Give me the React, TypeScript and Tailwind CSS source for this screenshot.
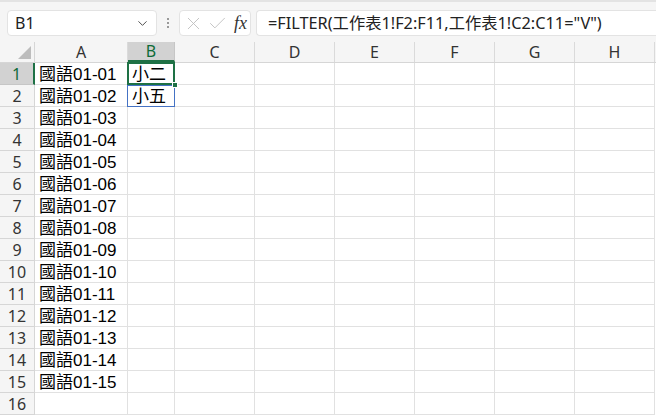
import { ChevronDown, X, Check } from 'lucide-react'

const cols = [
  { name: 'A', w: 'w-[93px]' },
  { name: 'B', w: 'w-[47px]' },
  { name: 'C', w: 'w-[80px]' },
  { name: 'D', w: 'w-[80px]' },
  { name: 'E', w: 'w-[80px]' },
  { name: 'F', w: 'w-[80px]' },
  { name: 'G', w: 'w-[80px]' },
  { name: 'H', w: 'w-[80px]' },
]

const colB: Record<number, string> = { 1: '小二', 2: '小五' }

export default function App() {
  const rows = Array.from({ length: 16 }, (_, i) => i + 1)

  return (
    <div
      className="w-[656px] h-[417px] overflow-hidden bg-white text-black"
      style={{ fontFamily: '"Noto Sans", "Noto Sans CJK TC", sans-serif' }}
    >
      {/* formula bar */}
      <div className="h-[42px] bg-[#f5f5f5] border-t-2 border-[#e3e3e3] flex items-start pt-[8px]">
        <div className="ml-[7px] w-[150px] h-[26px] rounded bg-white border border-[#e3e3e3] flex items-center justify-between pl-[7px] pr-[6px]">
          <span className="text-[16px] leading-none text-[#222]">B1</span>
          <ChevronDown size={15} strokeWidth={1.5} className="text-[#444]" />
        </div>
        <div className="w-[22px] h-[26px] flex flex-col items-center justify-center gap-[2px]">
          <span className="w-[2px] h-[2px] bg-[#999]" />
          <span className="w-[2px] h-[2px] bg-[#999]" />
          <span className="w-[2px] h-[2px] bg-[#999]" />
        </div>
        <div className="w-[72px] h-[26px] rounded bg-white border border-[#e3e3e3] flex items-center pl-[3px] gap-[3px]">
          <X size={21} strokeWidth={1} className="text-[#bdbdbd]" />
          <Check size={21} strokeWidth={1} className="text-[#bdbdbd]" />
          <span
            className="text-[18px] leading-none italic text-[#333] ml-[3px]"
            style={{ fontFamily: '"Liberation Serif", serif' }}
          >
            fx
          </span>
        </div>
        <div className="ml-[5px] flex-1 h-[26px] rounded-l bg-white border border-r-0 border-[#e3e3e3] flex items-center pl-[11px]">
          <span className="text-[16.3px] leading-none text-[#222] whitespace-nowrap">
            =FILTER(工作表1!F2:F11,工作表1!C2:C11="V")
          </span>
        </div>
      </div>

      {/* column headers */}
      <div className="flex h-[21px] bg-[#f5f5f5] border-b border-[#d6d6d6]">
        <div className="w-[35px] shrink-0 border-r border-[#d6d6d6] relative">
          <div
            className="absolute right-[3px] bottom-[3px] w-[13px] h-[13px] bg-[#bdbdbd]"
            style={{ clipPath: 'polygon(100% 0, 100% 100%, 0 100%)' }}
          />
        </div>
        {cols.map((c) => (
          <div
            key={c.name}
            className={`${c.w} shrink-0 flex items-center justify-center text-[16px] leading-none border-r ${
              c.name === 'B'
                ? 'bg-[#d2d2d2] text-[#0e6b38] border-[#c6c6c6] border-b-2 border-b-[#1e7145]'
                : 'text-[#333] border-[#dadada]'
            }`}
          >
            {c.name}
          </div>
        ))}
      </div>

      {/* rows */}
      {rows.map((r) => (
        <div key={r} className="flex h-[22px]">
          <div
            className={`w-[35px] shrink-0 flex items-center justify-center pt-[1px] text-[16px] leading-none border-b ${
              r === 1
                ? 'bg-[#d2d2d2] text-[#0e6b38] border-[#c6c6c6] border-r-2 border-r-[#1e7145]'
                : 'bg-[#f5f5f5] text-[#333] border-[#d6d6d6] border-r border-r-[#d6d6d6]'
            }`}
          >
            {r}
          </div>
          {cols.map((c) => (
            <div
              key={c.name}
              className={`${c.w} shrink-0 border-r border-b border-[#e1e1e1] relative flex items-center pl-[4px] pt-[2px] text-[17px] leading-none whitespace-nowrap ${
                c.name === 'B' && r === 1 ? 'z-10' : ''
              }`}
              style={{ fontFamily: '"Liberation Sans", "Noto Sans CJK TC", sans-serif' }}
            >
              {c.name === 'A' && r <= 15 ? `國語01-${String(r).padStart(2, '0')}` : null}
              {c.name === 'B' ? colB[r] : null}
              {c.name === 'B' && r === 1 && (
                <>
                  <div className="absolute -left-[1px] -top-[1px] -right-[1px] -bottom-[1px] border-2 border-[#1e7145]" />
                  <div className="absolute -right-[4px] -bottom-[4px] w-[6px] h-[6px] bg-[#1e7145] border border-white" />
                </>
              )}
              {c.name === 'B' && r === 2 && (
                <div className="absolute -left-[1px] top-0 -right-[1px] -bottom-[1px] border border-[#4472c4]" />
              )}
            </div>
          ))}
        </div>
      ))}
    </div>
  )
}
